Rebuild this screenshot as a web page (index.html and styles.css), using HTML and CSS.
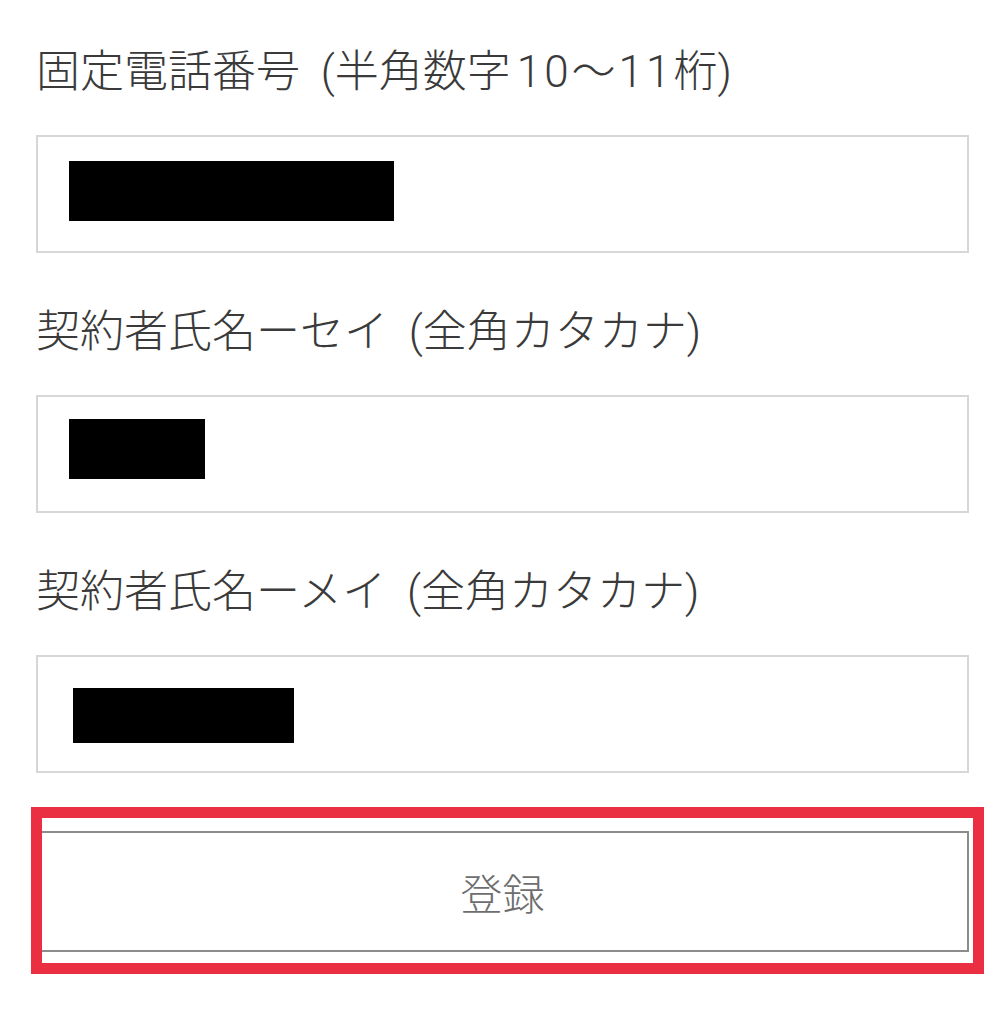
FILE: index.html
```html
<!DOCTYPE html>
<html lang="ja">
<head>
<meta charset="utf-8">
<title>登録フォーム</title>
<link rel="stylesheet" href="styles.css">
</head>
<body>
<form class="form">
  <div class="group">
    <div class="label">固定電話番号 (半角数字<span class="num">10〜11</span>桁)</div>
    <div class="field"><span class="redact r1"></span></div>
  </div>
  <div class="group">
    <div class="label">契約者氏名ーセイ (全角カタカナ)</div>
    <div class="field"><span class="redact r2"></span></div>
  </div>
  <div class="group">
    <div class="label">契約者氏名ーメイ (全角カタカナ)</div>
    <div class="field"><span class="redact r3"></span></div>
  </div>
  <div class="submit-wrap">
    <div class="submit">登録</div>
    <div class="highlight"></div>
  </div>
</form>
</body>
</html>
```

FILE: styles.css
```css
html, body {
  margin: 0;
  padding: 0;
  background: #ffffff;
}
body {
  font-family: Roboto, "Noto Sans CJK JP", sans-serif;
  width: 994px;
  height: 1024px;
  overflow: hidden;
}
.form {
  padding: 39px 25px 0 36px;
  display: flex;
  flex-direction: column;
  gap: 46px;
}
.group {
  display: flex;
  flex-direction: column;
  gap: 30px;
}
.label {
  font-size: 44px;
  font-weight: 300;
  line-height: 66px;
  height: 66px;
  color: #3a3a3a;
  white-space: nowrap;
  word-spacing: 10px;
}
.num {
  letter-spacing: 3px;
  margin-left: 6px;
}
.field {
  box-sizing: border-box;
  width: 933px;
  height: 118px;
  border: 2px solid #d7d7d7;
  background: #fff;
  display: flex;
  align-items: flex-start;
}
.redact {
  display: block;
  background: #000;
}
.r1 { width: 325px; height: 60px; margin: 24px 0 0 31px; }
.r2 { width: 136px; height: 60px; margin: 22px 0 0 31px; }
.r3 { width: 221px; height: 55px; margin: 31px 0 0 35px; }
.submit-wrap {
  position: relative;
  margin-top: 12px;
}
.submit {
  box-sizing: border-box;
  width: 933px;
  height: 121px;
  border: 2px solid #8c8c8c;
  display: flex;
  align-items: center;
  justify-content: center;
  font-size: 42px;
  font-weight: 300;
  color: #6e6e6e;
}
.highlight {
  position: absolute;
  left: -5px;
  top: -24px;
  width: 953px;
  height: 167px;
  box-sizing: border-box;
  border: 11px solid #ea2f42;
}
```
